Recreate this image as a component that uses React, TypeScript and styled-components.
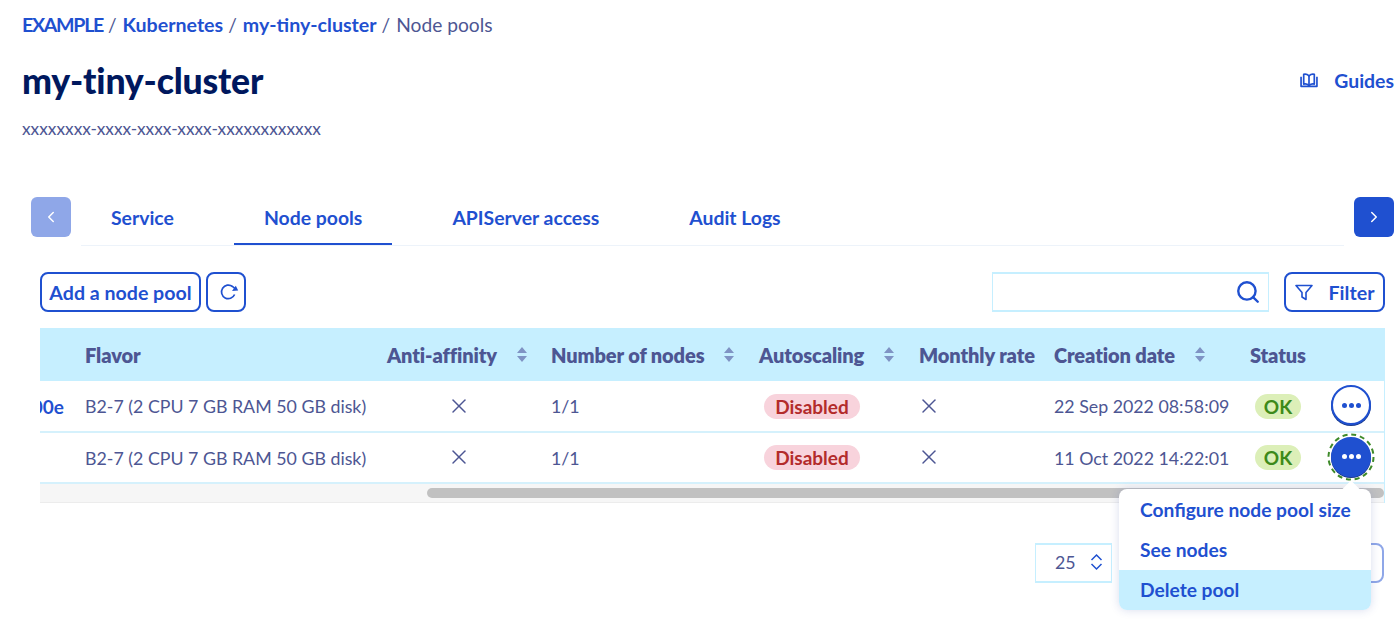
import React from "react";
import styled, { createGlobalStyle } from "styled-components";
import { ChevronLeft, ChevronRight, Search, X } from "lucide-react";

const BLUE = "#1f50d0";
const NAVY = "#00185e";
const GREY = "#4d5693";
const SKY = "#c6efff";

const GlobalStyle = createGlobalStyle`
  html, body {
    margin: 0;
    background: #fff;
    overflow: hidden;
    font-family: "Lato", "Noto Sans", sans-serif;
    font-size: 17.8px;
    color: ${GREY};
  }
`;

const Page = styled.div`
  width: 1400px;
  height: 621px;
  overflow: hidden;
`;

const Header = styled.header`
  padding: 11px 6px 0 22px;
`;

const Breadcrumb = styled.nav`
  display: flex;
  align-items: center;
  height: 26px;
`;

const Crumb = styled.a<{ $tight?: boolean }>`
  color: ${BLUE};
  font-size: 19.6px;
  font-weight: 700;
  letter-spacing: ${(p) => (p.$tight ? "-1.3px" : "0")};
`;

const CurrentCrumb = styled.span`
  color: ${GREY};
  font-size: 19.2px;
`;

const Separator = styled.span`
  margin: 0 6px 0 5px;
  font-size: 19px;
`;

const TitleRow = styled.div`
  display: flex;
  align-items: center;
  justify-content: space-between;
  margin-top: 20px;
  height: 46px;
`;

const Title = styled.h1`
  margin: 0;
  color: ${NAVY};
  font-size: 35.6px;
  font-weight: 900;
  letter-spacing: -0.2px;
`;

const GuidesLink = styled.a`
  display: flex;
  align-items: center;
  gap: 16px;
  color: ${BLUE};
  font-size: 19.4px;
  font-weight: 700;
`;

const ClusterId = styled.p`
  margin: 14px 0 0;
  font-size: 17.3px;
  line-height: 24px;
`;

const TabBar = styled.div`
  display: flex;
  margin: 56px 6px 0 31px;
  gap: 10px;
  align-items: flex-start;
`;

const ArrowButton = styled.button<{ $disabled?: boolean }>`
  flex: none;
  width: 40px;
  height: 40px;
  display: flex;
  align-items: center;
  justify-content: center;
  border: none;
  padding: 0;
  border-radius: 6px;
  color: #fff;
  background: ${(p) => (p.$disabled ? "#8fa7e8" : BLUE)};
`;

const Tabs = styled.div`
  flex: 1;
  display: flex;
  gap: 30px;
  height: 48px;
  border-bottom: 1px solid #edf3fa;
`;

const Tab = styled.a<{ $active?: boolean }>`
  padding: 0 30px;
  height: 46px;
  line-height: 41px;
  color: ${BLUE};
  font-size: 19.4px;
  font-weight: 700;
  border-bottom: ${(p) => (p.$active ? `2px solid ${BLUE}` : "none")};
`;

const Toolbar = styled.div`
  display: flex;
  align-items: center;
  margin: 26px 15px 0 40px;
`;

const OutlineButton = styled.button`
  height: 40px;
  display: flex;
  align-items: center;
  justify-content: center;
  padding: 0 8px;
  margin-right: 5px;
  background: #fff;
  border: 2px solid ${BLUE};
  border-radius: 8px;
  color: ${BLUE};
  font: 700 19.6px "Lato", "Noto Sans", sans-serif;
`;

const AddButton = styled(OutlineButton)`
  width: 161px;
  padding: 0;
`;

const IconButton = styled(OutlineButton)`
  width: 40px;
  padding: 0;
  margin: 0;
`;

const SearchBox = styled.div`
  margin-left: auto;
  width: 277px;
  height: 40px;
  box-sizing: border-box;
  display: flex;
  align-items: center;
  justify-content: flex-end;
  padding-right: 7px;
  border: 1px solid ${SKY};
  border-width: 2px 1px;
  color: ${BLUE};
`;

const FilterButton = styled(OutlineButton)`
  width: 101px;
  margin: 0 0 0 15px;
  gap: 16px;
`;

const TableWrap = styled.div`
  position: relative;
  margin: 16px 15px 0 40px;
`;

const Scroller = styled.div`
  overflow: hidden;
  border-right: 1px solid ${SKY};
`;

const Row = styled.div`
  display: grid;
  grid-template-columns: 45px 302px 164px 208px 160px 135px 196px 81px 54px;
  height: 51.5px;
  padding-top: 1px;
  align-items: center;
  border-bottom: 2px solid #d5f1fc;
  box-sizing: border-box;
`;

const HeadRow = styled(Row)`
  height: 53px;
  padding-top: 0;
  background: ${SKY};
  border-bottom: none;
`;

const HeadCell = styled.div`
  display: flex;
  align-items: center;
  gap: 20px;
  font-size: 20px;
  font-weight: 800;
  letter-spacing: -0.1px;
  white-space: nowrap;
`;

const IdCell = styled.div`
  display: flex;
  justify-content: flex-end;
  overflow: hidden;
  padding-right: 21px;
  color: ${BLUE};
  font-size: 19px;
  font-weight: 700;
`;

const Cell = styled.div<{ $inset?: number }>`
  display: flex;
  align-items: center;
  margin-left: ${(p) => p.$inset ?? 0}px;
  white-space: nowrap;
`;

const CrossIcon = styled(X)`
  margin-top: -1px;
`;

const Pill = styled.span<{ $tone: "red" | "green" }>`
  height: 25px;
  line-height: 25px;
  width: ${(p) => (p.$tone === "red" ? 96 : 46)}px;
  text-align: center;
  border-radius: 13px;
  font-size: 19px;
  font-weight: 700;
  color: ${(p) => (p.$tone === "red" ? "#b32b2b" : "#3d8a1a")};
  background: ${(p) => (p.$tone === "red" ? "#f8d3dc" : "#dcefb8")};
`;

const RoundButton = styled.button<{ $focused?: boolean }>`
  position: relative;
  width: 40px;
  height: 40px;
  padding: 0;
  margin-top: -2px;
  display: flex;
  align-items: center;
  justify-content: center;
  gap: 2px;
  border-radius: 50%;
  box-sizing: border-box;
  border: 2px solid ${BLUE};
  box-shadow: 0 1px 0 #1a3a8c;
  background: ${(p) => (p.$focused ? BLUE : "#fff")};
  color: ${(p) => (p.$focused ? "#fff" : BLUE)};
`;

const Dot = styled.i`
  width: 5px;
  height: 5px;
  border-radius: 50%;
  background: currentColor;
`;

const FocusRing = styled.svg`
  position: absolute;
  top: -7px;
  left: -7px;
`;

const Scrollbar = styled.div`
  height: 18px;
  background: #f6f6f6;
  border-bottom: 1px solid #ececec;
  display: flex;
  align-items: center;
`;

const Thumb = styled.div`
  height: 10px;
  margin-left: 387px;
  flex: 1;
  border-radius: 5px;
  background: #c1c1c1;
`;

const Menu = styled.div`
  position: absolute;
  top: 161px;
  right: 14px;
  width: 252px;
  padding-top: 1px;
  background: #fff;
  border-radius: 8px;
  box-shadow: 0 0 10px rgba(40, 60, 160, 0.18);
  &::before {
    content: "";
    position: absolute;
    top: -6px;
    right: 14px;
    width: 12px;
    height: 12px;
    background: #fff;
    transform: rotate(45deg);
  }
`;

const MenuItem = styled.div<{ $hover?: boolean }>`
  position: relative;
  height: 40px;
  line-height: 39px;
  padding-left: 21px;
  color: ${BLUE};
  font-size: 19.2px;
  font-weight: 700;
  background: ${(p) => (p.$hover ? SKY : "transparent")};
  border-radius: ${(p) => (p.$hover ? "0 0 8px 8px" : "0")};
`;

const Pager = styled.div`
  display: flex;
  justify-content: flex-end;
  gap: 8px;
  margin: 40px 16px 0 0;
`;

const PageSelect = styled.div`
  width: 77px;
  height: 40px;
  box-sizing: border-box;
  display: flex;
  align-items: center;
  justify-content: space-between;
  padding: 0 8px 2px 19px;
  border: 1px solid ${SKY};
  border-width: 2px 1px;
`;

const PageButton = styled.div`
  width: 264px;
  height: 40px;
  box-sizing: border-box;
  border: 2px solid #8fa7e8;
  border-radius: 8px;
`;

const Book = () => (
  <svg width="18" height="15" viewBox="0 0 17 14" fill="none" stroke={BLUE} strokeWidth="1.6" strokeLinejoin="round">
    <path d="M1 3.5v9h15v-9" />
    <path d="M3.5 1.2v9.2c1.8-.4 3.5 0 5 1.400 1.500-1.400 3.200-1.800 5-1.400V1.200c-1.800-.4-3.500 0-5 1.400-1.500-1.400-3.200-1.800-5-1.400z" />
    <path d="M8.500 2.600v9.200" />
  </svg>
);

const SortIcon = () => (
  <svg width="10" height="15" viewBox="0 0 10 15" fill="#7f93c4">
    <path d="M5 0l5 6H0zM5 15l5-6H0z" />
  </svg>
);

const RefreshIcon = () => (
  <svg width="20" height="20" viewBox="-3 0 20 20" overflow="visible" fill="none" stroke={BLUE} strokeWidth="1.700">
    <path d="M15.600 12.500A6.800 6.800 0 1 1 13.500 4.500c1.300.7 2.200 1.700 2.800 3" />
    <path d="M13 9l6.200-.6-2.400-4.600z" fill={BLUE} stroke="none" />
  </svg>
);

const FunnelIcon = () => (
  <svg width="18" height="17" viewBox="0 0 18 17" fill="none" stroke={BLUE} strokeWidth="1.600" strokeLinejoin="round">
    <path d="M1 1.500h16l-6 7v7l-4-2.500V8.500z" />
  </svg>
);

const SelectArrows = () => (
  <svg width="13" height="18" viewBox="0 0 13 18" fill="none" stroke={BLUE} strokeWidth="1.500">
    <path d="M1.500 7l5-5 5 5M1.500 11l5 5 5-5" />
  </svg>
);

const rows = [
  { id: "ad00e", date: "22 Sep 2022 08:58:09", focused: false },
  { id: "", date: "11 Oct 2022 14:22:01", focused: true },
];

const App: React.FC = () => (
  <Page>
    <GlobalStyle />
    <Header>
      <Breadcrumb>
        <Crumb $tight>EXAMPLE</Crumb>
        <Separator>/</Separator>
        <Crumb>Kubernetes</Crumb>
        <Separator>/</Separator>
        <Crumb>my-tiny-cluster</Crumb>
        <Separator>/</Separator>
        <CurrentCrumb>Node pools</CurrentCrumb>
      </Breadcrumb>
      <TitleRow>
        <Title>my-tiny-cluster</Title>
        <GuidesLink>
          <Book />
          Guides
        </GuidesLink>
      </TitleRow>
      <ClusterId>xxxxxxxx-xxxx-xxxx-xxxx-xxxxxxxxxxxx</ClusterId>
    </Header>

    <TabBar>
      <ArrowButton $disabled>
        <ChevronLeft size={18} />
      </ArrowButton>
      <Tabs>
        <Tab>Service</Tab>
        <Tab $active>Node pools</Tab>
        <Tab>APIServer access</Tab>
        <Tab>Audit Logs</Tab>
      </Tabs>
      <ArrowButton>
        <ChevronRight size={18} />
      </ArrowButton>
    </TabBar>

    <Toolbar>
      <AddButton>Add a node pool</AddButton>
      <IconButton>
        <RefreshIcon />
      </IconButton>
      <SearchBox>
        <Search size={26} strokeWidth={2.2} />
      </SearchBox>
      <FilterButton>
        <FunnelIcon />
        Filter
      </FilterButton>
    </Toolbar>

    <TableWrap>
      <Scroller>
        <HeadRow>
          <HeadCell />
          <HeadCell>Flavor</HeadCell>
          <HeadCell>
            Anti-affinity <SortIcon />
          </HeadCell>
          <HeadCell>
            Number of nodes <SortIcon />
          </HeadCell>
          <HeadCell>
            Autoscaling <SortIcon />
          </HeadCell>
          <HeadCell>Monthly rate</HeadCell>
          <HeadCell>
            Creation date <SortIcon />
          </HeadCell>
          <HeadCell>Status</HeadCell>
          <HeadCell />
        </HeadRow>
        {rows.map((row) => (
          <Row key={row.date}>
            <IdCell>{row.id}</IdCell>
            <Cell>B2-7 (2 CPU 7 GB RAM 50 GB disk)</Cell>
            <Cell $inset={60}>
              <CrossIcon size={24} strokeWidth={1.5} />
            </Cell>
            <Cell>1/1</Cell>
            <Cell $inset={5}>
              <Pill $tone="red">Disabled</Pill>
            </Cell>
            <Cell $inset={-2}>
              <CrossIcon size={24} strokeWidth={1.5} />
            </Cell>
            <Cell>{row.date}</Cell>
            <Cell $inset={5}>
              <Pill $tone="green">OK</Pill>
            </Cell>
            <Cell>
              <RoundButton $focused={row.focused}>
                <Dot />
                <Dot />
                <Dot />
                {row.focused && (
                  <FocusRing width="50" height="50" viewBox="0 0 50 50" fill="none">
                    <circle cx="25" cy="25" r="22.5" stroke="#3f8a2a" strokeWidth="2" strokeDasharray="5 3.8" />
                  </FocusRing>
                )}
              </RoundButton>
            </Cell>
          </Row>
        ))}
        <Scrollbar>
          <Thumb />
        </Scrollbar>
      </Scroller>
      <Menu>
        <MenuItem>Configure node pool size</MenuItem>
        <MenuItem>See nodes</MenuItem>
        <MenuItem $hover>Delete pool</MenuItem>
      </Menu>
    </TableWrap>

    <Pager>
      <PageSelect>
        25
        <SelectArrows />
      </PageSelect>
      <PageButton />
    </Pager>
  </Page>
);

export default App;
